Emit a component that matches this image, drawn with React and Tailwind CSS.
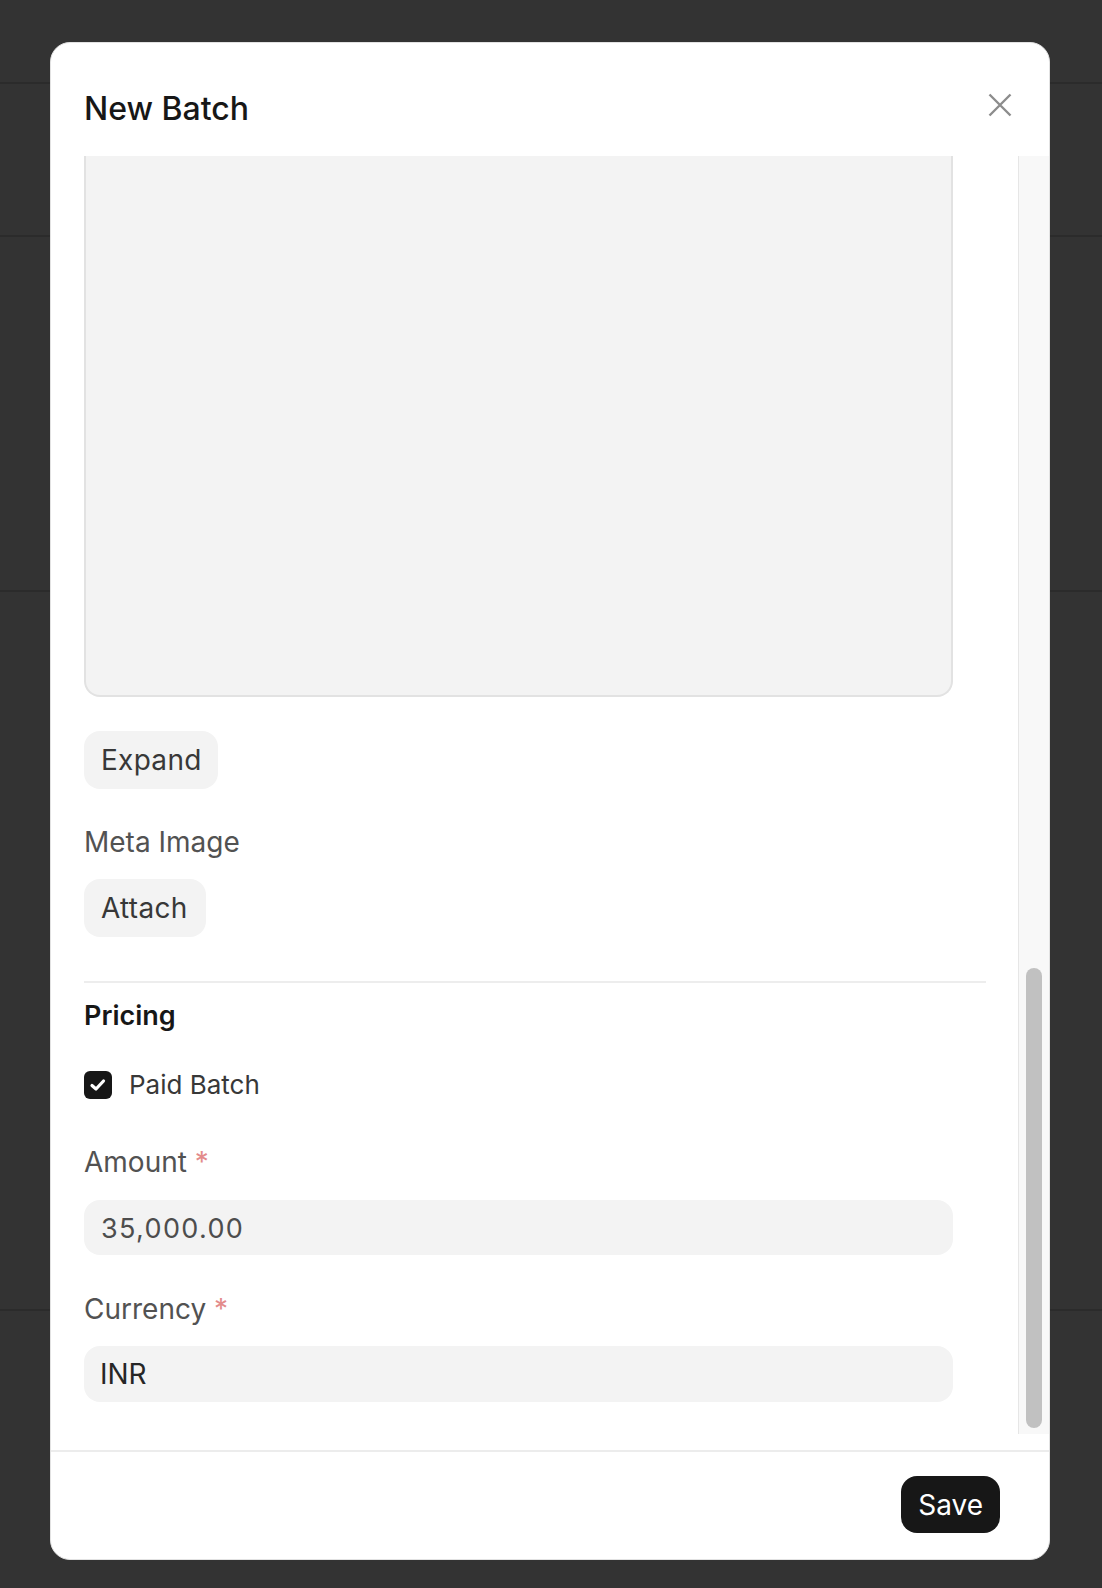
import React from 'react';

const font = { fontFamily: 'Inter, "Noto Sans", sans-serif' };

function BackgroundRows() {
  return (
    <div className="flex flex-col">
      <div className="h-[84px] border-b-2 border-[#2b2b2b]" />
      <div className="h-[153px] border-b-2 border-[#2b2b2b]" />
      <div className="h-[355px] border-b-2 border-[#2b2b2b]" />
      <div className="h-[719px] border-b-2 border-[#2b2b2b]" />
      <div className="h-[277px]" />
    </div>
  );
}

function Label({ children, required, className = '' }) {
  return (
    <div className={`h-[34px] text-[28px] leading-[34px] text-[#525252] ${className}`}>
      {children}
      {required && <span className="text-[#e38b8b]"> *</span>}
    </div>
  );
}

function GrayButton({ children, className = '' }) {
  return (
    <button className={`h-[58px] rounded-[16px] bg-[#f3f3f3] px-[17px] text-left text-[28px] leading-none tracking-[0.01em] text-[#383838] ${className}`}>
      {children}
    </button>
  );
}

export default function App() {
  return (
    <div className="relative h-[1588px] w-full overflow-hidden bg-[#333333]" style={font}>
      <BackgroundRows />

      {/* dialog */}
      <div className="absolute left-[50px] top-[42px] flex w-[1000px] flex-col rounded-[20px] border border-[#e2e2e2] bg-white">
        {/* header */}
        <div className="flex h-[113px] items-start justify-between pl-[33px] pr-[37px] pt-[46px]">
          <h2 className="text-[32px] font-medium leading-[40px] text-[#171717]">New Batch</h2>
          <button className="mt-[4px]">
            <svg width="24" height="24" viewBox="0 0 24 24" fill="none" stroke="#8c8c8c" strokeWidth="2.4">
              <path d="M1.5 1.5L22.5 22.5M22.5 1.5L1.5 22.5" />
            </svg>
          </button>
        </div>

        {/* scroll body */}
        <div className="flex h-[1278px]">
          <div className="flex flex-1 flex-col overflow-hidden pl-[33px]">
            <textarea
              readOnly
              className="h-[541px] w-[869px] shrink-0 resize-none rounded-b-[16px] border-2 border-t-0 border-[#e2e2e2] bg-[#f3f3f3] outline-none"
            />
            <GrayButton className="mt-[34px] w-[134px]">Expand</GrayButton>
            <Label className="mt-[36px]">Meta Image</Label>
            <GrayButton className="mt-[20px] w-[122px]">Attach</GrayButton>

            <div className="mt-[44px] h-[2px] w-[902px] bg-[#ededed]" />

            <div className="mt-[17px] h-[32px] text-[27px] font-semibold leading-[32px] text-[#171717]">Pricing</div>

            <div className="mt-[36px] flex h-[34px] items-center gap-[17px]">
              <div className="flex h-[28px] w-[28px] items-center justify-center rounded-[6px] bg-[#171717]">
                <svg width="28" height="28" viewBox="0 0 28 28" fill="none" stroke="white" strokeWidth="3.2" strokeLinecap="round" strokeLinejoin="round">
                  <polyline points="8,14.5 12,18 19.5,10" />
                </svg>
              </div>
              <span className="text-[26px] leading-[34px] text-[#383838]">Paid Batch</span>
            </div>

            <Label required className="mt-[43px]">Amount</Label>
            <div className="mt-[21px] flex h-[55px] w-[869px] items-center rounded-[16px] bg-[#f3f3f3] px-[17px] pt-[3px] text-[27px] tracking-[0.05em] text-[#4d4d4d]">
              35,000.00
            </div>

            <Label required className="mt-[37px]">Currency</Label>
            <div className="mt-[20px] flex h-[56px] w-[869px] items-center rounded-[16px] bg-[#f3f3f3] px-[16px] text-[28px] text-[#262626]">
              INR
            </div>
          </div>

          {/* scrollbar */}
          <div className="flex w-[31px] flex-col border-l border-[#e6e6e6] bg-[#f8f8f8] pl-[7px]">
            <div className="mt-[812px] h-[460px] w-[16px] rounded-full bg-[#c1c1c1]" />
          </div>
        </div>

        {/* footer */}
        <div className="mt-[16px] flex h-[109px] justify-end border-t-2 border-[#ececec] pr-[49px] pt-[24px]">
          <button className="h-[57px] rounded-[16px] bg-[#171717] px-[17px] text-[28px] leading-none text-white">
            Save
          </button>
        </div>
      </div>
    </div>
  );
}
